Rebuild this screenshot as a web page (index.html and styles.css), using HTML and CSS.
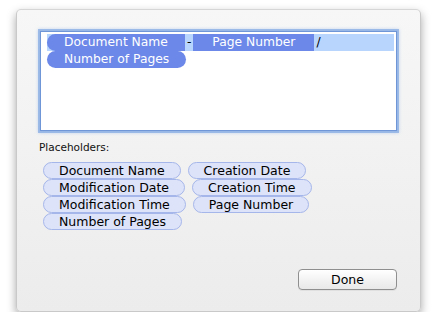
FILE: index.html
```html
<!DOCTYPE html>
<html lang="en">
<head>
    <meta charset="UTF-8">
    <title>Header Format</title>
    <link rel="stylesheet" href="styles.css">
</head>
<body>

<div class="sheet">
    <div class="field">
        <div class="sel">
            <span class="token left">Document Name</span><span class="sep">-</span><span class="token square">Page Number</span><span class="sep">/</span>
        </div>
        <div class="line">
            <span class="token">Number of Pages</span>
        </div>
    </div>

    <div class="label">Placeholders:</div>

    <div class="pills">
        <span class="pill">Document Name</span>
        <span class="pill">Creation Date</span>
        <span class="pill">Modification Date</span>
        <span class="pill">Creation Time</span>
        <span class="pill">Modification Time</span>
        <span class="pill">Page Number</span>
        <span class="pill">Number of Pages</span>
    </div>

    <div class="footer">
        <button class="done">Done</button>
    </div>
</div>

</body>
</html>
```

FILE: styles.css
```css
body {
    margin: 0;
    background: #fff;
    font-family: "DejaVu Sans", sans-serif;
}
.sheet {
    box-sizing: border-box;
    width: 405px;
    height: 303px;
    margin: 9px 0 0 16px;
    padding: 0 21px 0 21px;
    display: flex;
    flex-direction: column;
    background: linear-gradient(#f7f7f7, #ececec);
    border: 1px solid #c9c9c9;
    border-top-color: #d6d6d6;
    border-radius: 5px;
    box-shadow: 0 4px 10px rgba(0, 0, 0, 0.35);
}
.field {
    box-sizing: border-box;
    height: 100px;
    margin: 21px 2px 0 2px;
    padding: 2px 2px 0 6px;
    background: #fff;
    border: 1px solid #6f96d6;
    box-shadow: 0 0 0 2px rgba(125, 165, 225, 0.65), 0 0 3px 2px rgba(150, 185, 235, 0.5);
}
.sel {
    display: flex;
    height: 17px;
    background: #b7d5fd;
}
.line {
    display: flex;
    height: 17px;
}
.token {
    height: 17px;
    line-height: 17px;
    padding: 0 17px;
    background: #6c88e8;
    color: #fff;
    font-size: 12.3px;
    border-radius: 9px;
    white-space: nowrap;
}
.token.left {
    border-radius: 9px 0 0 9px;
}
.token.square {
    padding: 0 19px;
    border-radius: 0;
}
.sep {
    padding: 0 2px;
    line-height: 17px;
    font-size: 12.3px;
    color: #000;
}
.label {
    margin: 10px 0 0 1px;
    font-size: 10.5px;
    line-height: 13px;
    color: #111;
}
.pills {
    display: flex;
    flex-wrap: wrap;
    gap: 0 7px;
    width: 280px;
    margin: 8px 0 0 5px;
}
.pill {
    box-sizing: border-box;
    height: 17px;
    line-height: 15px;
    padding: 0 15px;
    background: #dde3f8;
    border: 1px solid #a5b6ea;
    border-radius: 9px;
    font-size: 12.5px;
    color: #000;
    white-space: nowrap;
}
.footer {
    display: flex;
    justify-content: flex-end;
    margin-top: auto;
    padding: 0 2px 21px 0;
}
.done {
    width: 99px;
    height: 21px;
    padding: 0;
    font-family: "DejaVu Sans", sans-serif;
    font-size: 12.5px;
    color: #000;
    background: linear-gradient(#ffffff, #f1f1f1 60%, #e9e9e9);
    border: 1px solid #8f8f8f;
    border-radius: 4px;
    box-shadow: 0 1px 0 rgba(0, 0, 0, 0.05);
}
```
